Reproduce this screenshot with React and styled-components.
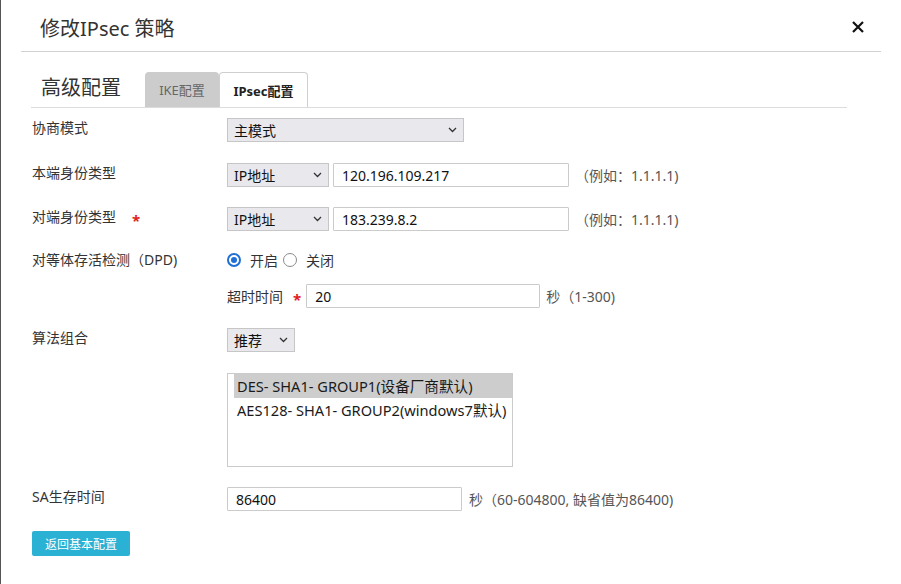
import React from "react";
import styled, { createGlobalStyle } from "styled-components";

const GlobalStyle = createGlobalStyle`
  html, body {
    margin: 0;
    padding: 0;
    background: #fff;
  }
  body {
    font-family: "Noto Sans", "Noto Sans CJK SC", sans-serif;
    color: #333;
  }
`;

const Modal = styled.div`
  width: 901px;
  height: 584px;
  box-sizing: border-box;
  border-left: 1px solid #555;
  background: #fff;
  overflow: hidden;
`;

const Header = styled.div`
  display: flex;
  justify-content: space-between;
  align-items: flex-start;
  margin: 0 20px;
  padding: 15px 17px 0 19px;
  height: 36px;
  border-bottom: 1px solid #d2d2d2;
`;

const Title = styled.h2`
  margin: 0;
  font-size: 20px;
  line-height: 28px;
  font-weight: 400;
  color: #333;
`;

const Close = styled.button`
  display: flex;
  margin-top: 6px;
  padding: 0;
  border: 0;
  background: none;
  cursor: pointer;
`;

const TabBar = styled.div`
  display: flex;
  align-items: flex-end;
  margin: 0 54px 0 30px;
  padding-top: 20px;
  border-bottom: 1px solid #dcdcdc;
`;

const Heading = styled.div`
  width: 114px;
  box-sizing: border-box;
  padding-left: 10px;
  height: 35px;
  font-size: 20px;
  line-height: 31px;
  color: #333;
`;

const Tab = styled.div`
  width: ${(p) => p.$width}px;
  height: 35px;
  box-sizing: border-box;
  text-align: center;
  font-size: 13px;
  line-height: 36px;
  border-radius: 4px 4px 0 0;
  background: ${(p) => (p.$active ? "#fff" : "#cccccc")};
  color: ${(p) => (p.$active ? "#222" : "#666")};
  font-weight: ${(p) => (p.$active ? 700 : 400)};
  border: ${(p) => (p.$active ? "1px solid #cfcfcf" : "0")};
  border-bottom: 0;
`;

const Form = styled.div`
  display: flex;
  flex-direction: column;
  padding: 0 0 0 31px;
  margin-top: 10px;
`;

const Row = styled.div`
  display: flex;
  align-items: flex-start;
  margin-top: ${(p) => p.$mt || 0}px;
`;

const Label = styled.div`
  display: flex;
  align-items: center;
  width: 195px;
  flex-shrink: 0;
  font-size: 14px;
  line-height: 20px;
  color: #333;
  white-space: nowrap;
`;

const Controls = styled.div`
  display: flex;
  align-items: center;
  height: ${(p) => p.$h || 24}px;
`;

const Star = styled.span`
  color: #e0201b;
  font-size: 15px;
  font-weight: 700;
  line-height: 10px;
  padding-top: 6px;
  margin: 0 ${(p) => p.$mr || 0}px 0 ${(p) => p.$ml || 0}px;
`;

const SelectBox = styled.div`
  display: flex;
  align-items: center;
  justify-content: space-between;
  width: ${(p) => p.$width}px;
  height: 24px;
  box-sizing: border-box;
  padding: 0 6px;
  margin-right: ${(p) => p.$mr || 0}px;
  border: 1px solid #c6c6c6;
  background: #e9e9ed;
  font-size: 14px;
  color: #111;
  white-space: nowrap;
`;

const TextInput = styled.input`
  width: ${(p) => p.$width}px;
  height: 24px;
  box-sizing: border-box;
  padding: 0 8px;
  border: 1px solid #cbcbcb;
  border-radius: 1px;
  font-family: inherit;
  font-size: 14px;
  color: #111;
  outline: none;
  background: #fff;
`;

const Hint = styled.span`
  margin-left: ${(p) => p.$ml || 6}px;
  font-size: 14px;
  color: #555;
  white-space: nowrap;
`;

const Text = styled.span`
  font-size: 14px;
  color: #333;
  white-space: nowrap;
  margin-right: ${(p) => p.$mr || 0}px;
`;

const Radio = styled.span`
  width: 14px;
  height: 14px;
  box-sizing: border-box;
  border-radius: 50%;
  border: ${(p) => (p.$checked ? "2px solid #1f6fd6" : "1px solid #8a8a8a")};
  display: flex;
  align-items: center;
  justify-content: center;
  margin-right: 9px;
  flex-shrink: 0;
  &::after {
    content: "";
    width: 6px;
    height: 6px;
    border-radius: 50%;
    background: ${(p) => (p.$checked ? "#1f6fd6" : "transparent")};
  }
`;

const ListBox = styled.div`
  width: 286px;
  height: 94px;
  box-sizing: border-box;
  border: 1px solid #cbcbcb;
  padding: 0 0 0 6px;
`;

const Option = styled.div`
  height: 24px;
  line-height: 24px;
  padding-left: 3px;
  font-size: 14.6px;
  color: #1a1a1a;
  white-space: nowrap;
  background: ${(p) => (p.$selected ? "#cdcdcd" : "transparent")};
`;

const Button = styled.button`
  width: 98px;
  height: 25px;
  padding: 0;
  border: 0;
  border-radius: 2px;
  background: #2bb1d4;
  color: #fff;
  font-family: inherit;
  font-size: 12px;
  cursor: pointer;
`;

function Chevron() {
  return (
    <svg width="9" height="6" viewBox="0 0 9 6">
      <path d="M1 1 L4.5 4.5 L8 1" fill="none" stroke="#333" strokeWidth="1.3" />
    </svg>
  );
}

function Select({ value, width, mr }) {
  return (
    <SelectBox $width={width} $mr={mr}>
      <span>{value}</span>
      <Chevron />
    </SelectBox>
  );
}

export default function App() {
  return (
    <>
      <GlobalStyle />
      <Modal>
        <Header>
          <Title>修改IPsec 策略</Title>
          <Close aria-label="close">
            <svg width="12" height="12" viewBox="0 0 12 12">
              <path d="M1 1 L11 11 M11 1 L1 11" stroke="#111" strokeWidth="2.2" />
            </svg>
          </Close>
        </Header>

        <TabBar>
          <Heading>高级配置</Heading>
          <Tab $width={74}>IKE配置</Tab>
          <Tab $width={89} $active>IPsec配置</Tab>
        </TabBar>

        <Form>
          <Row>
            <Label>协商模式</Label>
            <Controls>
              <Select value="主模式" width={237} />
            </Controls>
          </Row>

          <Row $mt={21}>
            <Label>本端身份类型</Label>
            <Controls>
              <Select value="IP地址" width={102} mr={4} />
              <TextInput $width={236} readOnly value="120.196.109.217" />
              <Hint $ml={6}>（例如：1.1.1.1)</Hint>
            </Controls>
          </Row>

          <Row $mt={20}>
            <Label>
              对端身份类型
              <Star $ml={16}>*</Star>
            </Label>
            <Controls>
              <Select value="IP地址" width={102} mr={4} />
              <TextInput $width={236} readOnly value="183.239.8.2" />
              <Hint $ml={6}>（例如：1.1.1.1)</Hint>
            </Controls>
          </Row>

          <Row $mt={19}>
            <Label>对等体存活检测（DPD)</Label>
            <Controls $h={20}>
              <Radio $checked />
              <Text $mr={5}>开启</Text>
              <Radio />
              <Text>关闭</Text>
            </Controls>
          </Row>

          <Row $mt={14}>
            <Label />
            <Controls>
              <Text>超时时间</Text>
              <Star $ml={10} $mr={5}>*</Star>
              <TextInput $width={234} readOnly value="20" />
              <Hint $ml={6}>秒（1-300)</Hint>
            </Controls>
          </Row>

          <Row $mt={20}>
            <Label>算法组合</Label>
            <Controls>
              <Select value="推荐" width={68} />
            </Controls>
          </Row>

          <Row $mt={21}>
            <Label />
            <ListBox>
              <Option $selected>DES- SHA1- GROUP1(设备厂商默认)</Option>
              <Option>AES128- SHA1- GROUP2(windows7默认)</Option>
            </ListBox>
          </Row>

          <Row $mt={20}>
            <Label>SA生存时间</Label>
            <Controls>
              <TextInput $width={235} readOnly value="86400" />
              <Hint $ml={7}>秒（60-604800, 缺省值为86400)</Hint>
            </Controls>
          </Row>

          <Row $mt={20}>
            <Button>返回基本配置</Button>
          </Row>
        </Form>
      </Modal>
    </>
  );
}
